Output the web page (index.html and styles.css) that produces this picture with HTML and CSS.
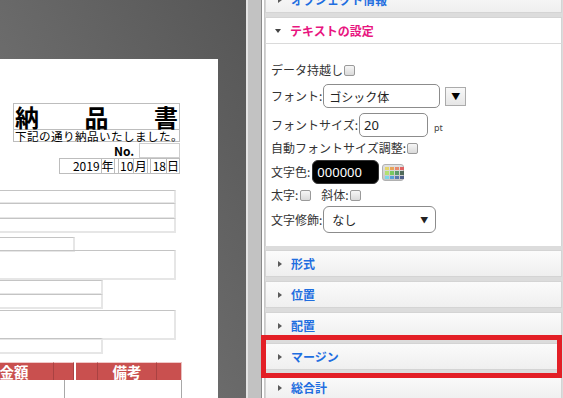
FILE: index.html
```html
<!DOCTYPE html>
<html lang="ja">
<head>
<meta charset="utf-8">
<title>テキストの設定</title>
<link rel="stylesheet" href="styles.css">
</head>
<body>
<div class="app">
  <div class="canvas">
    <div class="paper">
      <div class="title-block">
        <div class="title"><span>納</span><span>品</span><span>書</span></div>
        <div class="subtitle">下記の通り納品いたしました。</div>
      </div>
      <div class="no-row"><span class="no-label">No.</span><span class="no-cell"></span></div>
      <div class="date-row">
        <span class="dc dc-year">2019</span><span class="dc dc-unit">年</span><span class="dc dc-gap"></span><span class="dc dc-num">10</span><span class="dc dc-unit2">月</span><span class="dc dc-gap2"></span><span class="dc dc-num">18</span><span class="dc dc-unit">日</span>
      </div>
      <div class="fields">
        <div class="fld fa1"></div>
        <div class="fld fa2"></div>
        <div class="fld fa3"></div>
        <div class="fld fb"></div>
        <div class="fld fc"></div>
        <div class="fld fd1"></div>
        <div class="fld fd2"></div>
        <div class="fld fe"></div>
        <div class="fld ff"></div>
      </div>
      <div class="tbl">
        <div class="th-row">
          <div class="th th1">金額</div>
          <div class="th th2"></div>
          <div class="th-gap"></div>
          <div class="th th3"></div>
          <div class="th th4">備考</div>
          <div class="th th5"></div>
        </div>
        <div class="td-row">
          <div class="td td1"></div>
          <div class="td td2"></div>
        </div>
      </div>
    </div>
  </div>
  <div class="splitter"></div>
  <div class="panel">
    <div class="scroll">
      <div class="sec">
        <div class="hd"><span class="tri-r"></span>オブジェクト情報</div>
      </div>
      <div class="sec">
        <div class="hd hd-open"><span class="tri-d"></span>テキストの設定</div>
        <div class="body">
          <div class="row r1"><span class="lbl">データ持越し</span><span class="cb"></span></div>
          <div class="row r2"><span class="lbl">フォント:</span><span class="inp inp-font">ゴシック体</span><span class="btn-dd">▼</span></div>
          <div class="row r3"><span class="lbl">フォントサイズ:</span><span class="inp inp-size">20</span><span class="pt">pt</span></div>
          <div class="row r4"><span class="lbl">自動フォントサイズ調整:</span><span class="cb"></span></div>
          <div class="row r5"><span class="lbl">文字色:</span><span class="inp inp-color">000000</span>
            <span class="palette">
              <i class="c1"></i><i class="c2"></i><i class="c3"></i><i class="c4"></i>
              <i class="c5"></i><i class="c6"></i><i class="c7"></i><i class="c8"></i>
              <i class="c9"></i><i class="c10"></i><i class="c11"></i><i class="c12"></i>
            </span>
          </div>
          <div class="row r6"><span class="lbl">太字:</span><span class="cb cb-bold"></span><span class="lbl lbl-italic">斜体:</span><span class="cb"></span></div>
          <div class="row r7"><span class="lbl">文字修飾:</span><span class="select"><span>なし</span><span class="sel-arrow">▼</span></span></div>
        </div>
      </div>
      <div class="sec"><div class="hd"><span class="tri-r"></span>形式</div></div>
      <div class="sec"><div class="hd"><span class="tri-r"></span>位置</div></div>
      <div class="sec"><div class="hd"><span class="tri-r"></span>配置</div></div>
      <div class="sec"><div class="hd"><span class="tri-r"></span>マージン</div></div>
      <div class="sec"><div class="hd"><span class="tri-r"></span>総合計</div></div>
    </div>
  </div>
  <div class="highlight"></div>
</div>
</body>
</html>
```
FILE: styles.css
```css
* { box-sizing: border-box; margin: 0; padding: 0; }
html, body { width: 563px; height: 398px; overflow: hidden; background: #fff; }
body { font-family: "Noto Sans CJK JP", "Noto Sans", sans-serif; }

.app { position: relative; display: flex; width: 563px; height: 398px; }

/* ---------- canvas ---------- */
.canvas {
  flex: none; width: 246px; height: 398px; padding-top: 59px;
  background: linear-gradient(to bottom left, #565656, #7c7c7c);
}
.paper {
  width: 218px; height: 339px; background: #fff; overflow: hidden;
  padding-top: 44px; color: #000;
}
.title-block { margin-left: 13px; width: 167px; border: 1px solid #bdbdbd; }
.title {
  height: 25px; display: flex; justify-content: space-between; align-items: center;
  padding: 0 1px; font-size: 24px; font-weight: 700; line-height: 25px;
}
.subtitle {
  border-top: 1px solid #bdbdbd; height: 12px; font-size: 11.6px; line-height: 12px;
  white-space: nowrap; padding-left: 1px; letter-spacing: 0.4px;
}
.no-row { display: flex; align-items: center; height: 15px; margin-top: 1px; margin-left: 114px; }
.no-label { width: 25px; font-size: 12px; font-weight: 700; line-height: 14px; }
.no-cell { width: 41px; height: 15px; border: 1px solid #cfcfcf; }
.date-row {
  display: flex; margin-left: 59px; width: 121px; height: 16px;
  border: 1px solid #bdbdbd; font-size: 12px; line-height: 14px;
}
.dc { border-left: 1px solid #bdbdbd; }
.dc:first-child { border-left: none; }
.dc-year { width: 41px; text-align: right; padding-right: 1px; }
.dc-unit { width: 13px; text-align: center; }
.dc-unit2 { width: 14px; text-align: center; }
.dc-gap { width: 4px; }
.dc-gap2 { width: 3px; }
.dc-num { width: 16px; text-align: right; }

.fields { display: flex; flex-direction: column; margin-top: 16px; margin-left: -4px; }
.fld {
  border-top: 1px solid #c4c4c4; border-left: 1px solid #c4c4c4;
  border-right: 2px solid #e6e6e6; border-bottom: 2px solid #e6e6e6;
}
.fa1 { width: 180px; height: 14px; }
.fa2 { width: 180px; height: 16px; margin-top: -1px; }
.fa3 { width: 180px; height: 15px; margin-top: -1px; }
.fb { width: 79px; height: 15px; margin-top: 4px; }
.fc { width: 180px; height: 30px; margin-top: -2px; }
.fd1 { width: 107px; height: 15px; }
.fd2 { width: 107px; height: 15px; margin-top: -1px; }
.fe { width: 180px; height: 30px; margin-top: 1px; }
.ff { width: 107px; height: 16px; margin-top: -2px; }

.tbl { margin-top: 8px; margin-left: -25px; }
.th-row { display: flex; height: 18px; }
.th {
  background: #c9504f; color: #fff; font-size: 14.5px; font-weight: 700;
  line-height: 17px; text-align: center; border-top: 1px solid #f0c8c8;
  border-right: 1px solid #a94242;
}
.th1 { width: 79px; }
.th2 { width: 20px; }
.th-gap { width: 2px; background: #fff; }
.th3 { width: 22px; }
.th4 { width: 59px; }
.th5 { width: 25px; border-right: 1px solid #e8c0c0; }
.td-row { display: flex; height: 40px; }
.td { border-right: 1px solid #a8a8a8; }
.td1 { width: 90px; }
.td2 { width: 117px; }

/* ---------- splitter ---------- */
.splitter {
  flex: none; width: 18px;
  background: linear-gradient(to right, #e4e4e4 0 2px, #c2c2c2 2px 15px, #8a8a8a 15px 16px, #fff 16px 18px);
}

/* ---------- panel ---------- */
.panel {
  flex: 1; background: #dcdcdc; border-left: 1px solid #c8c8c8;
  padding-right: 1px; overflow: hidden;
}
.scroll { margin-top: -14px; }
.sec { margin-bottom: 4px; }
.hd {
  height: 27px; display: flex; align-items: center;
  background: linear-gradient(#fbfbfb, #efefef);
  border: 1px solid #d4d4d4; font-size: 12px; font-weight: 700; color: #1f6ee0; white-space: nowrap;
}
.hd-open { color: #e8157f; background: #fff; border-bottom-color: #dadada; }
.tri-r {
  width: 0; height: 0; margin-left: 12px; margin-right: 9px;
  border-left: 4px solid #5a5a5a; border-top: 3.5px solid transparent; border-bottom: 3.5px solid transparent;
}
.tri-d {
  width: 0; height: 0; margin-left: 9px; margin-right: 9px;
  border-top: 4px solid #444; border-left: 3.5px solid transparent; border-right: 3.5px solid transparent;
}
.body {
  height: 202px; background: #fff; border-left: 1px solid #d4d4d4; border-right: 1px solid #d4d4d4;
  padding-left: 5px; display: flex; flex-direction: column;
}
.row { display: flex; align-items: center; font-size: 12px; color: #333; white-space: nowrap; }
.r1 { height: 18px; margin-top: 17px; }
.r2 { height: 24px; margin-top: 5px; }
.r3 { height: 24px; margin-top: 5px; }
.r4 { height: 18px; margin-top: 2px; }
.r5 { height: 24px; margin-top: 3px; }
.r6 { height: 18px; margin-top: 2px; }
.r7 { height: 27px; margin-top: 2px; }
.lbl { line-height: 18px; }
.lbl-italic { margin-left: 10px; }
.cb {
  width: 11px; height: 11px; margin-left: 1px; border: 1px solid #9a9a9a; border-radius: 2px;
  background: linear-gradient(#f6f6f6, #dadada);
}
.cb-bold { margin-left: 2px; }
.inp {
  display: flex; align-items: center; height: 24px; border: 1px solid #8c8c8c; border-radius: 5px;
  font-family: "Noto Sans", "Noto Sans CJK JP", sans-serif; font-size: 13px; color: #222;
  padding-left: 5px; background: #fff;
}
.inp-font { width: 117px; margin-left: 1px; font-family: "Noto Sans CJK JP", sans-serif; font-size: 12px; }
.inp-size { width: 69px; margin-left: 1px; padding-left: 4px; }
.inp-color { width: 67px; margin-left: 2px; background: #000; color: #fff; border-color: #333; border-radius: 6px; padding-left: 4px; }
.btn-dd {
  width: 21px; height: 19px; margin-left: 5px; border: 1px solid #ababab;
  background: linear-gradient(#f8f8f8, #e6e6e6); color: #000; font-size: 9px;
  display: flex; align-items: center; justify-content: center;
}
.pt { margin-left: 6px; margin-top: 4px; font-family: "Noto Sans", sans-serif; font-size: 9px; color: #444; }
.palette {
  width: 22px; height: 17px; margin-left: 3px; border-radius: 3px; border: 1px solid #b0b0b0;
  background: linear-gradient(#e2e2e2, #c4c4c4); padding: 2px;
  display: grid; grid-template-columns: repeat(4, 4px); grid-template-rows: repeat(3, 3.6px); gap: 1px;
}
.palette i { display: block; }
.c1 { background: #e6d66a; } .c2 { background: #e8a45a; } .c3 { background: #e8886c; } .c4 { background: #e06262; }
.c5 { background: #b2e070; } .c6 { background: #78c860; } .c7 { background: #5a9a6a; } .c8 { background: #506a5a; }
.c9 { background: #7ad6e8; } .c10 { background: #58a0d8; } .c11 { background: #5878b0; } .c12 { background: #50608a; }
.select {
  width: 113px; height: 27px; margin-left: 1px; border: 1px solid #8c8c8c; border-radius: 6px;
  display: flex; align-items: center; justify-content: space-between; padding: 0 7px 0 8px;
  font-size: 12px; color: #222; background: #fff;
}
.sel-arrow { font-size: 8px; color: #222; }

/* ---------- annotation ---------- */
.highlight {
  position: absolute; left: 261px; top: 335px; width: 301px; height: 43px;
  border: 5px solid #e31f26;
}
```
